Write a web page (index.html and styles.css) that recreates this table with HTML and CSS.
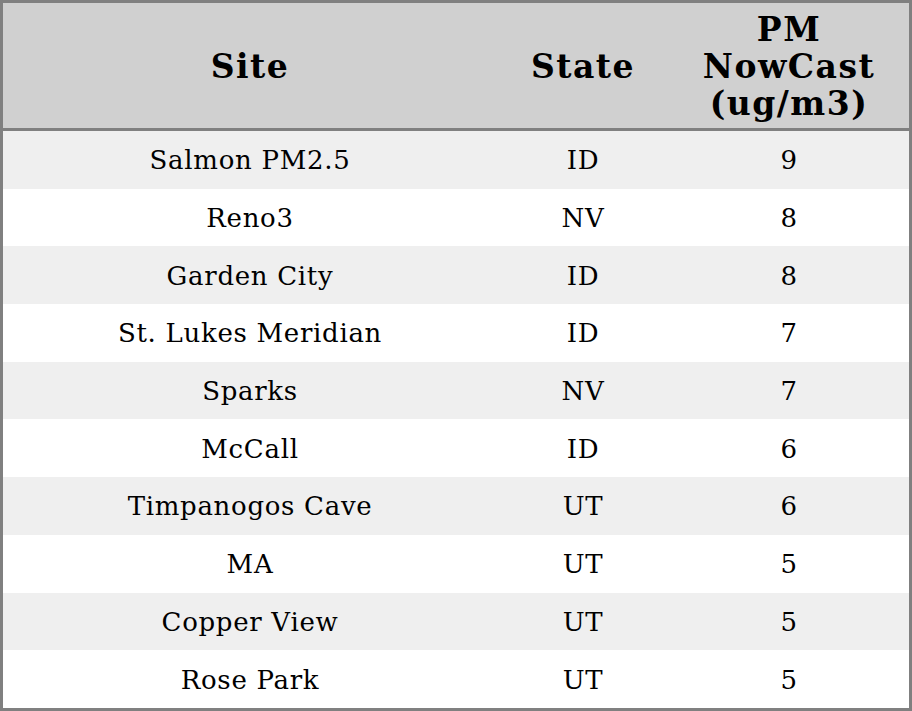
FILE: index.html
```html
<!DOCTYPE html>
<html>
<head>
<meta charset="utf-8">
<link rel="stylesheet" href="styles.css">
</head>
<body>
<table class="aq">
  <thead>
    <tr><th class="c-site">Site</th><th class="c-state">State</th><th class="c-pm">PM<br>NowCast<br>(ug/m3)</th></tr>
  </thead>
  <tbody>
    <tr><td>Salmon PM2.5</td><td>ID</td><td>9</td></tr>
    <tr><td>Reno3</td><td>NV</td><td>8</td></tr>
    <tr><td>Garden City</td><td>ID</td><td>8</td></tr>
    <tr><td>St. Lukes Meridian</td><td>ID</td><td>7</td></tr>
    <tr><td>Sparks</td><td>NV</td><td>7</td></tr>
    <tr><td>McCall</td><td>ID</td><td>6</td></tr>
    <tr><td>Timpanogos Cave</td><td>UT</td><td>6</td></tr>
    <tr><td>MA</td><td>UT</td><td>5</td></tr>
    <tr><td>Copper View</td><td>UT</td><td>5</td></tr>
    <tr><td>Rose Park</td><td>UT</td><td>5</td></tr>
  </tbody>
</table>
</body>
</html>
```
FILE: styles.css
```css
html, body { margin: 0; padding: 0; background: #fff; }
.aq {
  width: 912px;
  border-collapse: collapse;
  border: 3px solid #808080;
  font-family: "DejaVu Serif", serif;
  color: #000;
  table-layout: fixed;
}
.aq th {
  background: #d0d0d0;
  font-size: 33px;
  font-weight: bold;
  line-height: 37px;
  letter-spacing: 1.5px;
  padding: 8px 0 6px;
  border-bottom: 3px solid #808080;
  text-align: center;
}
.c-site { width: 494px; }
.c-state { width: 172px; }
.aq td {
  font-size: 26px;
  height: 56.7px;
  padding: 1px 0 0;
  text-align: center;
  letter-spacing: 0.7px;
}
.aq tbody tr:nth-child(odd) td { background: #efefef; }
```
